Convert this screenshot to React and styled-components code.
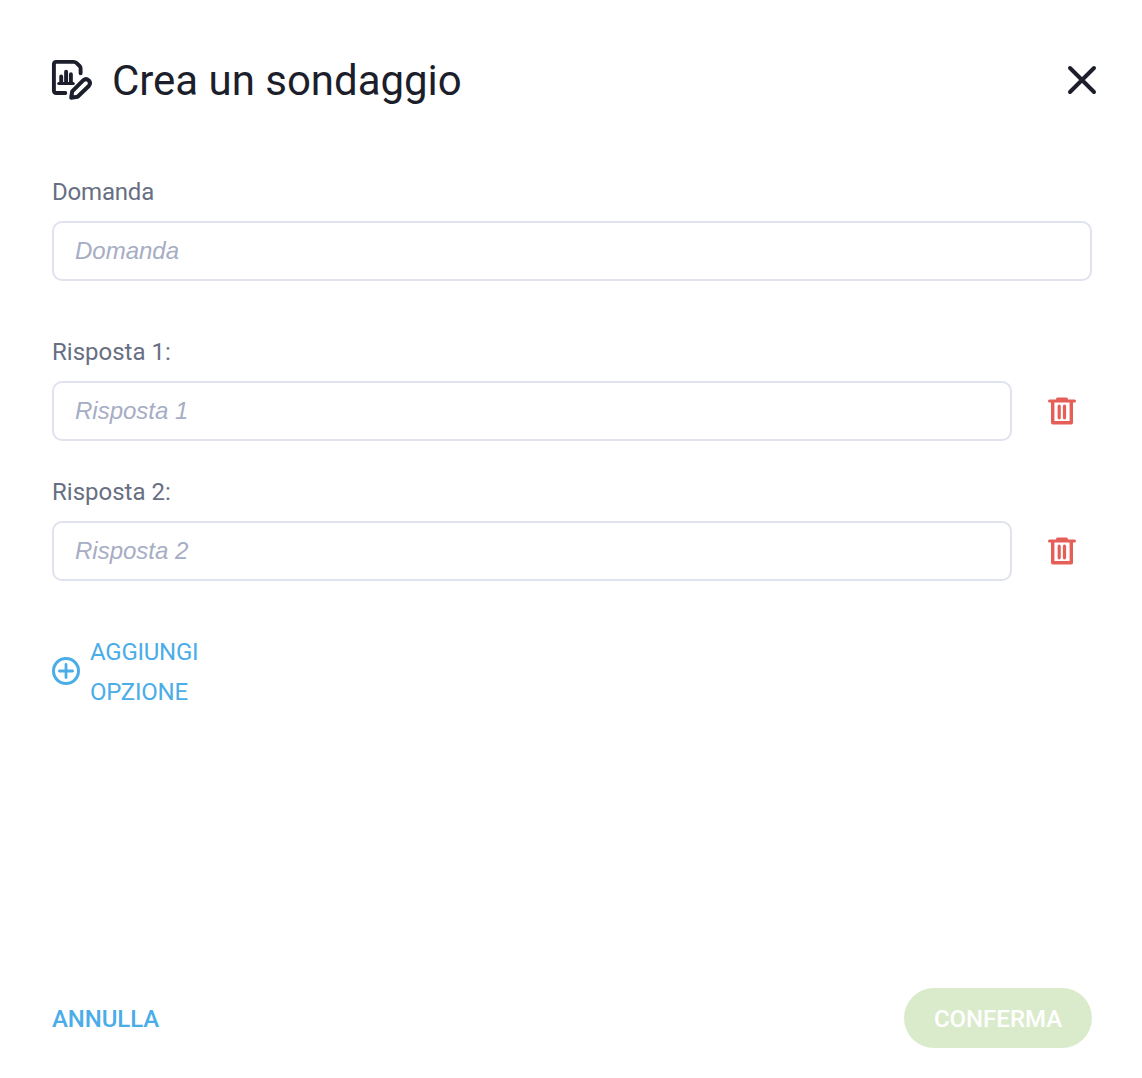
import styled, {createGlobalStyle} from "styled-components";

const ColorDark = '#1c1f2b'
const ColorGrey = '#686f82'
const ColorPlaceholder = '#a6adc4'
const ColorBorder = '#e0e3ed'
const ColorBlue = '#4bade8'
const ColorRed = '#e65e58'
const ColorGreen = '#daebcb'

const GlobalStyle = createGlobalStyle`
  * {
    box-sizing: border-box;
  }

  body {
    margin: 0;
    background: #fff;
    font-family: Roboto, "Liberation Sans", sans-serif;
  }

  button {
    padding: 0;
    border: 0;
    background: none;
    font-family: inherit;
  }

  svg {
    display: block;
    flex: none;
  }
`

const Dialog = styled.div`
  display: flex;
  flex-direction: column;
  height: 1078px;
  padding: 50px 50px 30px 52px;
`

const Header = styled.header`
  display: flex;
  align-items: center;
  height: 60px;
  margin-right: -6px;
`

const Title = styled.h1`
  flex: 1;
  margin: 0 0 0 20px;
  padding-top: 2px;
  font-size: 42px;
  font-weight: 400;
  line-height: 60px;
  letter-spacing: -0.03px;
  color: ${ColorDark};
`

const Form = styled.form`
  flex: 1;
  padding-top: 62px;
`

const Field = styled.div`
  margin-bottom: ${({gap}) => gap};
`

const Label = styled.label`
  display: block;
  margin-bottom: 9px;
  font-size: 24px;
  line-height: 40px;
  letter-spacing: ${({spacing}) => spacing || 'normal'};
  color: ${ColorGrey};
`

const FieldRow = styled.div`
  display: flex;
  align-items: center;
`

const Input = styled.input`
  flex: 1;
  min-width: 0;
  height: 60px;
  padding: 0 21px;
  border: 2px solid ${ColorBorder};
  border-radius: 10px;
  font-family: "Liberation Sans", Arial, sans-serif;
  font-size: 24px;
  color: ${ColorDark};

  &::placeholder {
    font-style: italic;
    color: ${ColorPlaceholder};
    opacity: 1;
  }
`

const DeleteButton = styled.button`
  display: flex;
  justify-content: center;
  width: 28px;
  margin: 0 16px 0 36px;
`

const AddButton = styled.button`
  display: flex;
  align-items: center;
  gap: 10px;
  width: 150px;
  font-size: 24px;
  line-height: 40px;
  letter-spacing: -0.25px;
  text-align: left;
  color: ${ColorBlue};

  svg {
    margin-bottom: 2px;
  }
`

const Footer = styled.footer`
  display: flex;
  align-items: center;
  justify-content: space-between;
`

const CancelButton = styled.button`
  padding-top: 2px;
  font-size: 24px;
  font-weight: 500;
  line-height: 58px;
  letter-spacing: -0.1px;
  color: ${ColorBlue};
`

const ConfirmButton = styled.button`
  width: 188px;
  height: 60px;
  padding-top: 2px;
  border-radius: 30px;
  font-size: 24px;
  font-weight: 500;
  color: #fff;
  background: ${ColorGreen};
`

const PollIcon = () => (
    <svg width="40" height="40" viewBox="0 0 40 40" fill="none" stroke={ColorDark} strokeWidth="3.9"
         strokeLinecap="round" strokeLinejoin="round" overflow="visible">
        <path d="M13.3 33H4.3Q1.9 33 1.9 30.5V4.3Q1.9 1.9 4.3 1.9H21.8Q23.3 1.9 24.4 2.9L27.6 6Q28.6 7 28.6 8.5V13.3"/>
        <path d="M6.8 23.5H21.2" strokeWidth="3.2"/>
        <path d="M9.2 16.5V23M14.1 11.7V23M18.9 14.2V23" strokeWidth="3.9"/>
        <path d="M19.2 37.8L20.2 31.4L31.4 20.2Q34 17.9 36.8 20.4Q39.2 23.2 36.8 26L25.6 36.8Z" strokeWidth="4"/>
    </svg>
)

const CloseIcon = () => (
    <svg width="32" height="32" viewBox="0 0 32 32" fill="none" stroke={ColorDark} strokeWidth="4"
         strokeLinecap="round">
        <path d="M4 4L28 28M28 4L4 28"/>
    </svg>
)

const TrashIcon = () => (
    <svg width="28" height="28" viewBox="0 0 28 28" fill="none" stroke={ColorRed}>
        <path d="M1.5 3.9H26.5" strokeWidth="3" strokeLinecap="round"/>
        <path d="M9.5 2.1H18.5" strokeWidth="3" strokeLinecap="round"/>
        <path d="M4.7 4V25.7H23.3V4" strokeWidth="3.4" strokeLinejoin="round"/>
        <path d="M11.2 9.2V20.8M16.5 9.2V20.8" strokeWidth="3.2" strokeLinecap="round"/>
    </svg>
)

const PlusIcon = () => (
    <svg width="28" height="28" viewBox="0 0 28 28" fill="none" stroke={ColorBlue} strokeLinecap="round">
        <circle cx="14" cy="14" r="12.5" strokeWidth="3"/>
        <path d="M7.4 14H20.6M14 7.4V20.6" strokeWidth="2.8"/>
    </svg>
)

const answers = [
    {id: 1, gap: '31px'},
    {id: 2, gap: '51px'},
]

const App = () => {
    return (
        <>
            <GlobalStyle/>
            <Dialog>
                <Header>
                    <PollIcon/>
                    <Title>Crea un sondaggio</Title>
                    <button aria-label="Chiudi">
                        <CloseIcon/>
                    </button>
                </Header>

                <Form>
                    <Field gap={'51px'}>
                        <Label htmlFor="question" spacing={'-0.2px'}>Domanda</Label>
                        <FieldRow>
                            <Input id="question" placeholder="Domanda"/>
                        </FieldRow>
                    </Field>

                    {answers.map(({id, gap}) => (
                        <Field key={id} gap={gap}>
                            <Label htmlFor={'answer' + id}>{`Risposta ${id}:`}</Label>
                            <FieldRow>
                                <Input id={'answer' + id} placeholder={'Risposta ' + id}/>
                                <DeleteButton type="button" aria-label="Elimina">
                                    <TrashIcon/>
                                </DeleteButton>
                            </FieldRow>
                        </Field>
                    ))}

                    <AddButton type="button">
                        <PlusIcon/>
                        AGGIUNGI OPZIONE
                    </AddButton>
                </Form>

                <Footer>
                    <CancelButton>ANNULLA</CancelButton>
                    <ConfirmButton disabled>CONFERMA</ConfirmButton>
                </Footer>
            </Dialog>
        </>
    )
}

export default App;
